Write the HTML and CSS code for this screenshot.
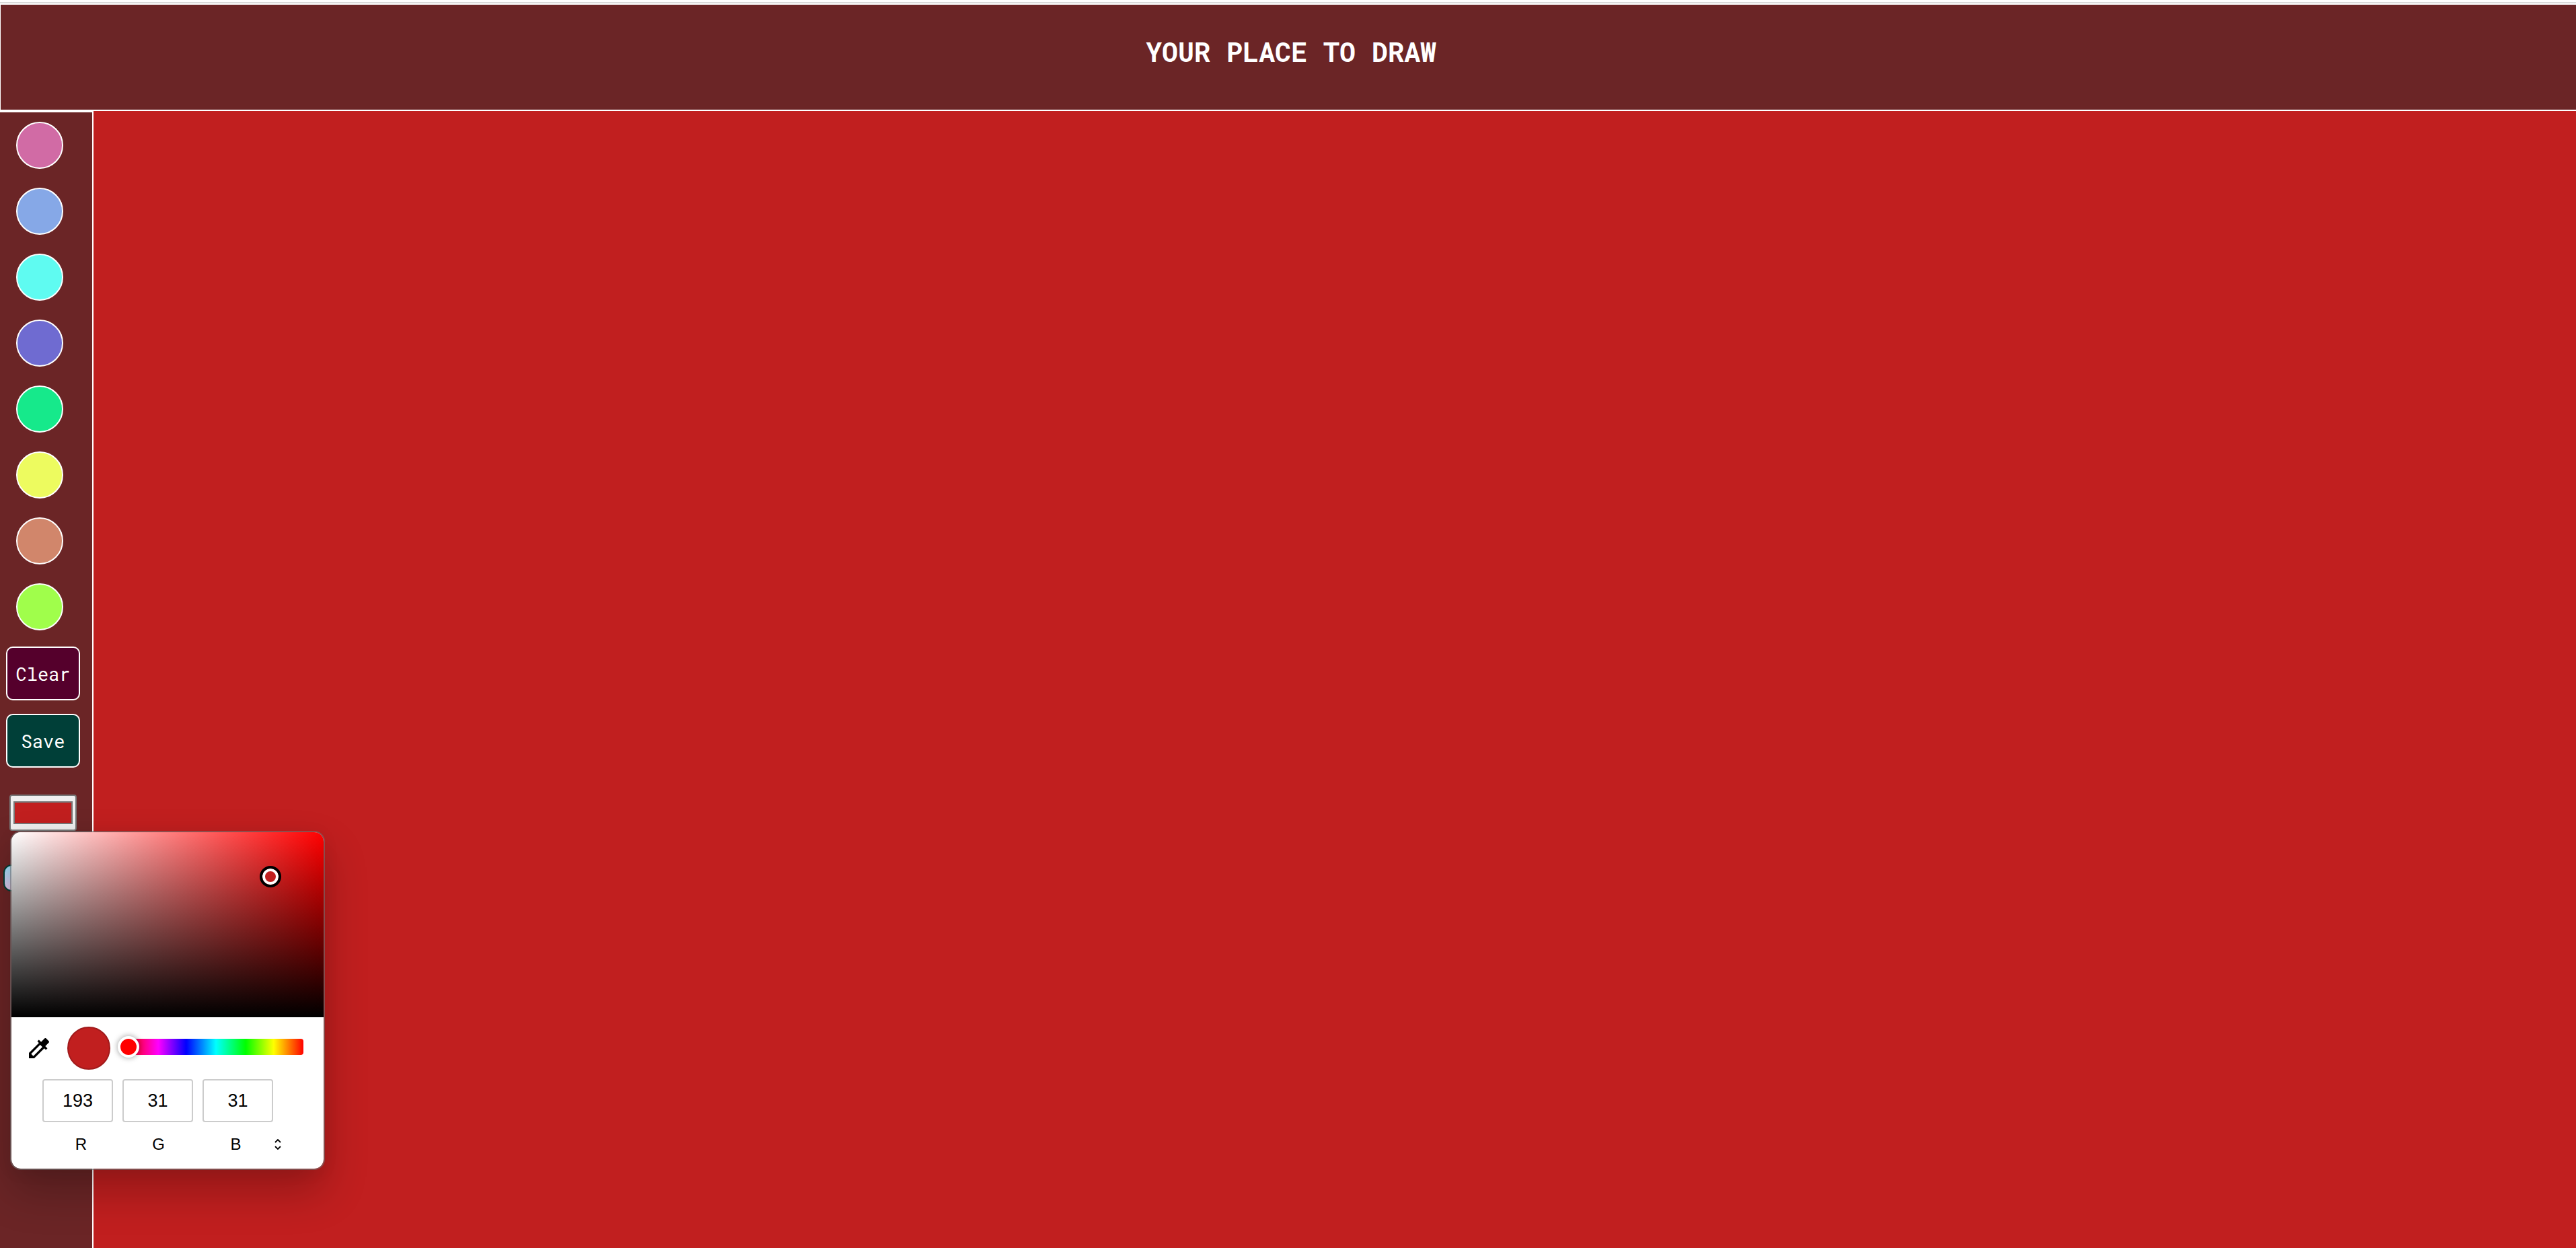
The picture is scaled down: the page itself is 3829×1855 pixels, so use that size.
FILE: index.html
```html
<!DOCTYPE html>
<html lang="en">
<head>
<meta charset="utf-8">
<title>Your place to draw</title>
<link rel="stylesheet" href="styles.css">
</head>
<body>
<header class="banner"><h1 class="title">YOUR PLACE TO DRAW</h1></header>
<main class="workspace">
  <aside class="tools">
    <div class="palette">
      <button class="dot pink" aria-label="Pink"></button>
      <button class="dot blue" aria-label="Blue"></button>
      <button class="dot cyan" aria-label="Cyan"></button>
      <button class="dot violet" aria-label="Violet"></button>
      <button class="dot green" aria-label="Green"></button>
      <button class="dot yellow" aria-label="Yellow"></button>
      <button class="dot clay" aria-label="Clay"></button>
      <button class="dot lime" aria-label="Lime"></button>
    </div>
    <button class="action clear">Clear</button>
    <button class="action save">Save</button>
    <div class="color-field">
      <input class="color-input" type="color" value="#c11f1f" aria-label="Brush color">
      <div class="picker" role="dialog" aria-label="Color picker">
        <div class="spectrum"><span class="spectrum-thumb"></span></div>
        <div class="hue-row">
          <button class="eyedropper" aria-label="Pick from screen">
            <svg viewBox="3 3 18 18" width="30" height="30"><path d="M20.71 5.63l-2.34-2.34a.996.996 0 0 0-1.41 0l-3.12 3.12-1.93-1.91-1.41 1.41 1.42 1.42L3 16.25V21h4.75l8.92-8.92 1.42 1.42 1.41-1.41-1.92-1.92 3.12-3.12c.4-.4.4-1.03.01-1.42zM6.92 19L5 17.08l8.06-8.06 1.92 1.92L6.92 19z"/></svg>
          </button>
          <span class="preview"></span>
          <input class="hue" type="range" min="0" max="360" value="0" aria-label="Hue">
        </div>
        <div class="values">
          <input class="value" id="red" type="text" value="193">
          <input class="value" id="green" type="text" value="31">
          <input class="value" id="blue" type="text" value="31">
        </div>
        <div class="names">
          <label class="name" for="red">R</label>
          <label class="name" for="green">G</label>
          <label class="name" for="blue">B</label>
          <button class="format" aria-label="Change color format">
            <svg viewBox="0 0 10 16" width="10" height="16"><path d="M1 5l4-4 4 4M1 11l4 4 4-4" fill="none" stroke="#000" stroke-width="1.8"/></svg>
          </button>
        </div>
      </div>
    </div>
    <input class="size" type="range" min="1" max="100" value="50" aria-label="Brush size">
  </aside>
  <canvas class="board"></canvas>
</main>
</body>
</html>
```

FILE: styles.css
```css
*, *::before { box-sizing: border-box; }
html { height: 100%; }
body {
  margin: 0;
  min-height: 100%;
  display: flex;
  flex-direction: column;
  background: #fff;
  font-family: "Roboto Mono", "DejaVu Sans Mono", monospace;
}
body::before {
  content: "";
  height: 5px;
  border-bottom: 2px solid #dadada;
}
button { padding: 0; font: inherit; cursor: pointer; }
.banner {
  background: #6b2526;
  border: 2px solid #fff;
  border-left-width: 1px;
  border-right: 0;
  padding: 47px 0 63px 8px;
}
.title {
  margin: 0;
  color: #fff;
  font-size: 40px;
  line-height: 46px;
  text-align: center;
}
.workspace { flex: 1; display: flex; }
.tools {
  width: 139px;
  background: #6b2526;
  border-top: 2px solid #fff;
  border-right: 2px solid #fff;
  padding-top: 14px;
}
.palette {
  display: grid;
  gap: 28px;
  padding-left: 24px;
  margin-bottom: 24px;
}
.dot {
  width: 70px;
  height: 70px;
  border: 2px solid #fff;
  border-radius: 50%;
}
.pink { background: #d16ba5; }
.blue { background: #86a8e7; }
.cyan { background: #5ffbf1; }
.violet { background: #6f6bd1; }
.green { background: #16e98b; }
.yellow { background: #edfb5f; }
.clay { background: #d1866b; }
.lime { background: #a0fe4b; }
.action {
  display: block;
  width: 110px;
  height: 80px;
  margin: 0 0 20px 9px;
  border: 2px solid #fff;
  border-radius: 10px;
  color: #fff;
  font-size: 27px;
}
.clear { background: #55002c; }
.save { background: #003f38; }
.color-field {
  position: relative;
  margin: 40px 0 50px 14px;
  width: 100px;
}
.color-input {
  display: block;
  width: 100px;
  height: 54px;
  padding: 0;
  border: 2px solid #767676;
  border-radius: 4px;
  background: #efefef;
}
.color-input::-webkit-color-swatch-wrapper { padding: 8px 4px; }
.color-input::-webkit-color-swatch { border: 2px solid #777; border-radius: 0; }
.picker {
  position: absolute;
  z-index: 1;
  top: 54px;
  left: 1px;
  width: 468px;
  padding-bottom: 22px;
  border: 2px solid rgba(110, 110, 110, 0.6);
  border-radius: 16px;
  background: #fff;
  background-clip: padding-box;
  box-shadow: 0 32px 64px rgba(0, 0, 0, 0.24), 0 4px 24px rgba(0, 0, 0, 0.06);
  font-family: "Liberation Sans", Arial, sans-serif;
}
.spectrum {
  position: relative;
  height: 275px;
  border-radius: 14px 14px 0 0;
  background: linear-gradient(to top, #000, transparent), linear-gradient(to right, #fff, #f00);
}
.spectrum-thumb {
  position: absolute;
  left: 83%;
  top: 24%;
  width: 32px;
  height: 32px;
  margin: -16px;
  border: 4px solid #000;
  border-radius: 50%;
  background: #c11f1f;
  box-shadow: inset 0 0 0 4px #fff;
}
.hue-row {
  display: flex;
  align-items: center;
  height: 92px;
  padding: 0 30px 0 26px;
}
.eyedropper, .format {
  display: flex;
  border: 0;
  background: none;
}
.preview {
  width: 64px;
  height: 64px;
  margin: 0 11px 0 27px;
  border: 2px solid #a01a1b;
  border-radius: 50%;
  background: #c11f1f;
}
.hue {
  flex: 1;
  min-width: 0;
  height: 24px;
  margin: 0 0 4px;
  appearance: none;
  border-radius: 4px;
  background: linear-gradient(to left, #f00, #ff0 17%, #0f0 33%, #0ff 50%, #00f 67%, #f0f 83%, #f00) no-repeat right / calc(100% - 16px) 100%;
}
.hue::-webkit-slider-thumb {
  appearance: none;
  width: 32px;
  height: 32px;
  border: 4px solid #fff;
  border-radius: 50%;
  background: #f00;
  box-shadow: 0 0 8px rgba(0, 0, 0, 0.4);
}
.values {
  display: flex;
  gap: 14px;
  padding-left: 46px;
}
.value {
  width: 105px;
  height: 64px;
  padding: 0;
  border: 2px solid #ccc;
  border-radius: 4px;
  background: #fff;
  color: #000;
  font: 27px "Liberation Sans", Arial, sans-serif;
  text-align: center;
}
.names {
  display: flex;
  align-items: center;
  margin-top: 19px;
  padding-left: 46px;
  font-size: 24px;
  line-height: 28px;
}
.name { width: 115px; text-align: center; }
.size {
  display: block;
  width: 110px;
  height: 40px;
  margin: 0 0 0 5px;
  appearance: none;
  border: 2px solid #003f38;
  border-radius: 12px;
  background: linear-gradient(to top, #e6c4e8, #9ce0fa);
}
.size::-webkit-slider-thumb {
  appearance: none;
  width: 20px;
  height: 36px;
  border-radius: 8px;
  background: #003f38;
}
.board {
  flex: 1;
  min-width: 0;
  contain: size;
  background: #c11f1f;
}
```
